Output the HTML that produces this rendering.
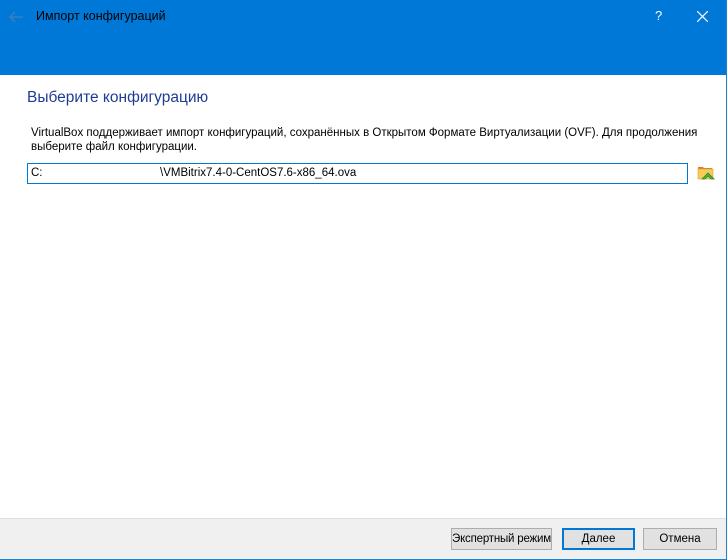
<!DOCTYPE html>
<html><head><meta charset="utf-8"><style>
body{margin:0;width:727px;height:560px;overflow:hidden;font-family:"Liberation Sans","DejaVu Sans",sans-serif;position:relative;background:#fff}
.abs{position:absolute}
.hdr{left:0;top:0;width:727px;height:75px;background:#0078d7}
.ft{left:0;top:518px;width:727px;height:42px;background:#f0f0f0;border-top:1px solid #dfdfdf;box-sizing:border-box}
.btn{top:528px;height:22px;background:#e1e1e1;border:1px solid #adadad;box-sizing:border-box;font-size:11.5px;text-align:center;line-height:20px;color:#000;white-space:nowrap;overflow:hidden}
</style></head><body>
<div class="abs hdr"></div>
<svg class="abs" style="left:8px;top:10px" width="16" height="14"><path d="M2 7H15M7 2L2 7L7 12" stroke="#3a7cc4" stroke-width="1.6" fill="none"/></svg>
<div class="abs" style="left:36px;top:9px;font-size:12.5px;color:#000">Импорт конфигураций</div>
<div class="abs" style="left:655px;top:8px;font-size:13px;color:#fff">?</div>
<svg class="abs" style="left:697px;top:11px" width="11" height="11"><path d="M0 0L11 11M11 0L0 11" stroke="#fff" stroke-width="1.2"/></svg>
<div class="abs" style="left:27px;top:89px;font-size:15.5px;color:#1e3c96">Выберите конфигурацию</div>
<div class="abs" style="left:31px;top:126px;font-size:11.5px;line-height:14px;color:#000;width:680px">VirtualBox поддерживает импорт конфигураций, сохранённых в Открытом Формате Виртуализации (OVF). Для продолжения выберите файл конфигурации.</div>
<div class="abs" style="left:27px;top:163px;width:661px;height:21px;border:1px solid #0078d7;box-sizing:border-box"></div>
<div class="abs" style="left:31px;top:167px;font-size:11.5px">C:</div>
<div class="abs" style="left:160px;top:167px;font-size:11.5px">\VMBitrix7.4-0-CentOS7.6-x86_64.ova</div>
<svg class="abs" style="left:697px;top:164px" width="18" height="18"><path d="M1 3h5l1 1h8v10H1z" fill="#e8772a"/><rect x="1" y="5" width="15" height="10" fill="#f5cc5a" stroke="#d9a030" stroke-width=".6"/><path d="M5 15L11 9L17 15L14 15L11 12L8 15Z" fill="#4cb43a" stroke="#2d8a22" stroke-width=".8"/></svg>
<div class="abs ft"></div>
<div class="abs btn" style="left:451px;width:101px;letter-spacing:-0.2px">Экспертный режим</div>
<div class="abs btn" style="left:562px;width:73px;border:2px solid #0078d7;line-height:18px">Далее</div>
<div class="abs btn" style="left:643px;width:74px">Отмена</div>
<div class="abs" style="left:726px;top:0;width:1px;height:560px;background:#1883d7"></div>
<div class="abs" style="left:0;top:559px;width:727px;height:1px;background:#1883d7"></div>
</body></html>
